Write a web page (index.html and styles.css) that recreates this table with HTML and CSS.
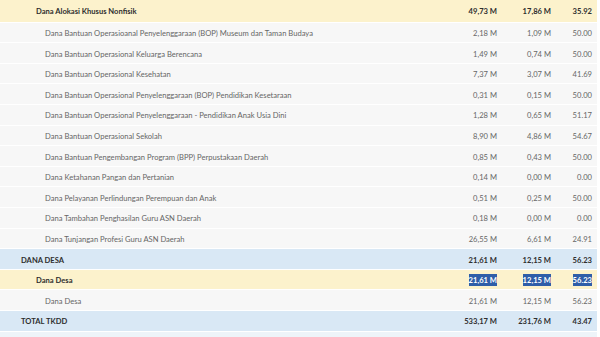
FILE: index.html
```html
<!DOCTYPE html>
<html>
<head>
<meta charset="utf-8">
<link rel="stylesheet" href="styles.css">
</head>
<body>
<div class="table">
  <div class="row sub bold first"><span class="name l2">Dana Alokasi Khusus Nonfisik</span><span class="num">49,73 M</span><span class="num">17,86 M</span><span class="num">35.92</span></div>
  <div class="row item"><span class="name l3">Dana Bantuan Operasioanal Penyelenggaraan (BOP) Museum dan Taman Budaya</span><span class="num">2,18 M</span><span class="num">1,09 M</span><span class="num">50.00</span></div>
  <div class="row item"><span class="name l3">Dana Bantuan Operasional Keluarga Berencana</span><span class="num">1,49 M</span><span class="num">0,74 M</span><span class="num">50.00</span></div>
  <div class="row item"><span class="name l3">Dana Bantuan Operasional Kesehatan</span><span class="num">7,37 M</span><span class="num">3,07 M</span><span class="num">41.69</span></div>
  <div class="row item"><span class="name l3">Dana Bantuan Operasional Penyelenggaraan (BOP) Pendidikan Kesetaraan</span><span class="num">0,31 M</span><span class="num">0,15 M</span><span class="num">50.00</span></div>
  <div class="row item"><span class="name l3">Dana Bantuan Operasional Penyelenggaraan - Pendidikan Anak Usia Dini</span><span class="num">1,28 M</span><span class="num">0,65 M</span><span class="num">51.17</span></div>
  <div class="row item"><span class="name l3">Dana Bantuan Operasional Sekolah</span><span class="num">8,90 M</span><span class="num">4,86 M</span><span class="num">54.67</span></div>
  <div class="row item"><span class="name l3">Dana Bantuan Pengembangan Program (BPP) Perpustakaan Daerah</span><span class="num">0,85 M</span><span class="num">0,43 M</span><span class="num">50.00</span></div>
  <div class="row item"><span class="name l3">Dana Ketahanan Pangan dan Pertanian</span><span class="num">0,14 M</span><span class="num">0,00 M</span><span class="num">0.00</span></div>
  <div class="row item"><span class="name l3">Dana Pelayanan Perlindungan Perempuan dan Anak</span><span class="num">0,51 M</span><span class="num">0,25 M</span><span class="num">50.00</span></div>
  <div class="row item"><span class="name l3">Dana Tambahan Penghasilan Guru ASN Daerah</span><span class="num">0,18 M</span><span class="num">0,00 M</span><span class="num">0.00</span></div>
  <div class="row item"><span class="name l3">Dana Tunjangan Profesi Guru ASN Daerah</span><span class="num">26,55 M</span><span class="num">6,61 M</span><span class="num">24.91</span></div>
  <div class="row top bold"><span class="name l1">DANA DESA</span><span class="num">21,61 M</span><span class="num">12,15 M</span><span class="num">56.23</span></div>
  <div class="row sub bold"><span class="name l2">Dana Desa</span><span class="num"><span class="sel">21,61 M</span></span><span class="num"><span class="sel">12,15 M</span></span><span class="num"><span class="sel">56.23</span></span></div>
  <div class="row item"><span class="name l3">Dana Desa</span><span class="num">21,61 M</span><span class="num">12,15 M</span><span class="num">56.23</span></div>
  <div class="row top bold"><span class="name l1">TOTAL TKDD</span><span class="num">533,17 M</span><span class="num">231,76 M</span><span class="num">43.47</span></div>
  <div class="row tail"></div>
</div>
</body>
</html>
```

FILE: styles.css
```css
html, body {
  margin: 0;
  padding: 0;
  background: #ffffff;
}

body {
  font-family: "Lato", "Open Sans", sans-serif;
  font-size: 7.6px;
  color: #666666;
  overflow: hidden;
}

.table {
  width: 597px;
}

.row {
  display: grid;
  grid-template-columns: 1fr 60px 54px 41px;
  align-items: center;
  height: 20.6px;
  box-sizing: border-box;
  border-bottom: 1px solid #ffffff;
  padding-top: 1px;
  padding-right: 5px;
  background: #f7f7f7;
}

.row.first {
  height: 22.7px;
  padding-top: 0;
}

.row.sub {
  background: #fcf2cc;
}

.row.top {
  background: #d9e8f5;
}

.row.tail {
  background: #eef4f9;
  height: 6px;
  border-bottom: none;
}

.bold {
  font-weight: 700;
  color: #2e2e2e;
}

.name {
  white-space: nowrap;
}

.l1 { padding-left: 21px; }
.l2 { padding-left: 36px; }
.l3 { padding-left: 45px; }

.num {
  text-align: right;
  white-space: nowrap;
}

.sel {
  background: #2f5ea8;
  color: #ffffff;
  padding: 1px 0;
}
```
